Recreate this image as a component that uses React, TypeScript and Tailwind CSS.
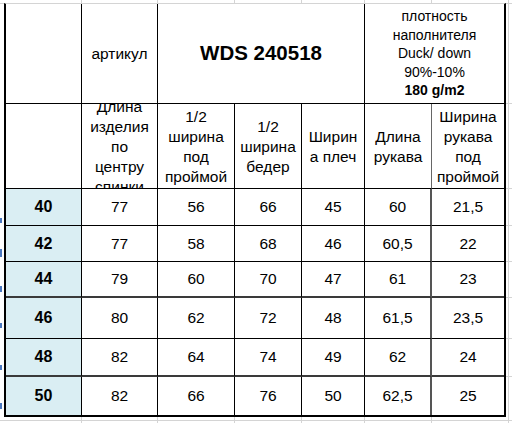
import React from "react";

const rows: [string, string[]][] = [
  ["40", ["77", "56", "66", "45", "60", "21,5"]],
  ["42", ["77", "58", "68", "46", "60,5", "22"]],
  ["44", ["79", "60", "70", "47", "61", "23"]],
  ["46", ["80", "62", "72", "48", "61,5", "23,5"]],
  ["48", ["82", "64", "74", "49", "62", "24"]],
  ["50", ["82", "66", "76", "50", "62,5", "25"]],
];

const heavyBottom = [2, 4]; // row indexes with thicker bottom line

function GridLines() {
  const colX = [81, 157, 234, 301, 364, 431];
  const rowY = [103, 188, 225, 261, 297, 338, 376];
  const blue = [
    [218, 5],
    [249, 8],
    [286, 6],
    [323, 5],
    [365, 5],
    [403, 6],
  ];
  return (
    <div className="pointer-events-none absolute inset-0">
      <div className="absolute left-0 right-0 top-[3px] h-px bg-[#d4d4d4]" />
      <div className="absolute left-0 right-0 top-[420px] h-px bg-[#d4d4d4]" />
      <div className="absolute top-0 bottom-0 left-[508px] w-px bg-[#d4d4d4]" />
      {colX.map((x) => (
        <React.Fragment key={x}>
          <div className="absolute top-0 h-[3px] w-px bg-[#d4d4d4]" style={{ left: x }} />
          <div className="absolute top-[417px] bottom-0 w-px bg-[#d4d4d4]" style={{ left: x }} />
        </React.Fragment>
      ))}
      {rowY.map((y) => (
        <div key={y} className="absolute left-[506px] right-0 h-px bg-[#d4d4d4]" style={{ top: y }} />
      ))}
      {blue.map(([y, h]) => (
        <div key={y} className="absolute left-0 w-[2px] bg-[#4a78c0]" style={{ top: y, height: h }} />
      ))}
    </div>
  );
}

export default function App() {
  const cell =
    "flex items-center justify-center text-center overflow-hidden border-black";
  return (
    <div
      className="relative w-[512px] h-[423px] bg-white overflow-hidden text-black"
      style={{ fontFamily: '"Liberation Sans", Arial, sans-serif' }}
    >
      <GridLines />
      <div className="relative ml-[4px] pt-[3px]">
        <div className="w-[502px] border-t border-t-[#d4d4d4] border-l-2 border-r-2 border-b-2 border-l-black border-r-black border-b-black bg-white grid grid-cols-[76px_76px_77px_67px_63px_67px_72px] grid-rows-[100px_85px_37px_36px_36px_41px_38px_38px]">
          {/* header row 1 */}
          <div className={`${cell} border-r border-b`} />
          <div className={`${cell} border-r border-b text-[15.5px]`}>артикул</div>
          <div className={`${cell} col-span-3 border-r border-b text-[20.5px] font-bold`}>
            WDS 240518
          </div>
          <div className={`${cell} col-span-2 border-b text-[14px] leading-[18.5px] flex-col`}>
            <span>плотность</span>
            <span>наполнителя</span>
            <span>Duck/ down</span>
            <span>90%-10%</span>
            <span className="font-bold">180 g/m2</span>
          </div>

          {/* header row 2 */}
          <div className={`${cell} border-r border-b`} />
          <div className={`${cell} border-r border-b text-[15.5px] leading-[20px] flex-col pt-[2px]`}>
            <span>Длина</span>
            <span>изделия</span>
            <span>по</span>
            <span>центру</span>
            <span>спинки</span>
          </div>
          <div className={`${cell} border-r border-b text-[15.5px] leading-[20px] flex-col pt-[2px]`}>
            <span>1/2</span>
            <span>ширина</span>
            <span>под</span>
            <span>проймой</span>
          </div>
          <div className={`${cell} border-r border-b text-[15.5px] leading-[20px] flex-col pt-[2px]`}>
            <span>1/2</span>
            <span>ширина</span>
            <span>бедер</span>
          </div>
          <div className={`${cell} border-r border-b text-[15.5px] leading-[20px] flex-col pt-[2px]`}>
            <span>Ширин</span>
            <span>а плеч</span>
          </div>
          <div className={`${cell} border-r border-b text-[15.5px] leading-[20px] flex-col pt-[2px]`}>
            <span>Длина</span>
            <span>рукава</span>
          </div>
          <div className={`${cell} border-b text-[15.5px] leading-[20px] flex-col pt-[2px] border-l border-l-[#666] -ml-px`}>
            <span>Ширина</span>
            <span>рукава</span>
            <span>под</span>
            <span>проймой</span>
          </div>

          {/* data rows */}
          {rows.map(([size, vals], ri) => {
            const last = ri === rows.length - 1;
            const bb = last
              ? ""
              : heavyBottom.includes(ri)
              ? "border-b-2 border-b-[#3a3a3a]"
              : "border-b";
            return (
              <React.Fragment key={size}>
                <div className={`${cell} border-r ${bb} bg-[#daeef3] text-[16px] font-bold`}>
                  {size}
                </div>
                {vals.map((v, ci) => {
                  const lastCol = ci === vals.length - 1;
                  const br = lastCol
                    ? ""
                    : ci === vals.length - 2
                    ? "border-r-2 border-r-[#555]"
                    : "border-r";
                  return (
                    <div key={ci} className={`${cell} ${br} ${bb} text-[15.5px]`}>
                      {v}
                    </div>
                  );
                })}
              </React.Fragment>
            );
          })}
        </div>
      </div>
    </div>
  );
}
